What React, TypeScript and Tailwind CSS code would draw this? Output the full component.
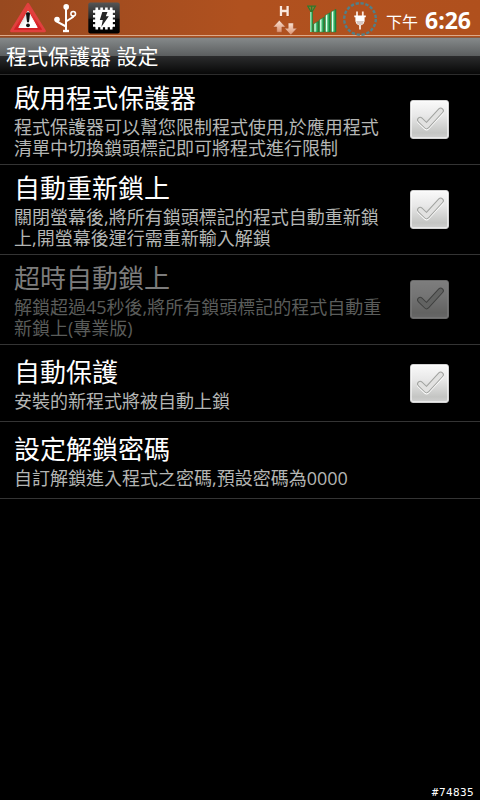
import { useState } from "react";

type Setting = {
  id: string;
  title: string;
  lines: string[];
  checkable?: boolean;
  disabled?: boolean;
};

const settings: Setting[] = [
  {
    id: "enable",
    title: "啟用程式保護器",
    lines: ["程式保護器可以幫您限制程式使用,於應用程式", "清單中切換鎖頭標記即可將程式進行限制"],
    checkable: true,
  },
  {
    id: "relock",
    title: "自動重新鎖上",
    lines: ["關閉螢幕後,將所有鎖頭標記的程式自動重新鎖", "上,開螢幕後運行需重新輸入解鎖"],
    checkable: true,
  },
  {
    id: "timeout",
    title: "超時自動鎖上",
    lines: ["解鎖超過45秒後,將所有鎖頭標記的程式自動重", "新鎖上(專業版)"],
    checkable: true,
    disabled: true,
  },
  { id: "protect", title: "自動保護", lines: ["安裝的新程式將被自動上鎖"], checkable: true },
  { id: "password", title: "設定解鎖密碼", lines: ["自訂解鎖進入程式之密碼,預設密碼為0000"] },
];

function WarningIcon() {
  return (
    <svg width="38" height="34" viewBox="0 0 38 34">
      <defs>
        <linearGradient id="warn" x1="0" y1="0" x2="0" y2="1">
          <stop offset="0" stopColor="#ee4a45" />
          <stop offset="1" stopColor="#d01a20" />
        </linearGradient>
        <linearGradient id="warnIn" x1="0" y1="0" x2="1" y2="1">
          <stop offset="0" stopColor="#b8b8b8" />
          <stop offset="0.6" stopColor="#ffffff" />
        </linearGradient>
      </defs>
      <path d="M19 3.2 35.6 30H2.4Z" fill="url(#warn)" stroke="#e0403e" strokeWidth="2.6" strokeLinejoin="round" />
      <path d="M19 10 28.2 26.5H9.8Z" fill="url(#warnIn)" stroke="url(#warnIn)" strokeWidth="1" strokeLinejoin="round" />
      <path d="M17 12.2q2-1.8 4 0l-1 9h-2Z" fill="#111" />
      <circle cx="19" cy="24.3" r="1.9" fill="#111" />
    </svg>
  );
}

function UsbIcon() {
  return (
    <svg width="24" height="30" viewBox="0 0 24 30" fill="none" stroke="#fff" strokeWidth="2">
      <path d="M12 3v24M12 22.5 3.5 18v-5M12 17.5l7-4.5v-1.5" />
      <circle cx="12.2" cy="2.9" r="2.8" fill="#fff" stroke="none" />
      <circle cx="3" cy="15.6" r="2.8" fill="#fff" stroke="none" />
      <circle cx="19.2" cy="9.8" r="2.3" strokeWidth="1.6" />
      <path d="M9 27h6" strokeWidth="2.4" />
    </svg>
  );
}

function ChipIcon() {
  return (
    <svg width="32" height="32" viewBox="0 0 32 32">
      <defs>
        <linearGradient id="chip" x1="0" y1="0" x2="0" y2="1">
          <stop offset="0" stopColor="#565656" />
          <stop offset="0.5" stopColor="#242424" />
          <stop offset="0.55" stopColor="#0a0a0a" />
          <stop offset="1" stopColor="#000" />
        </linearGradient>
      </defs>
      <rect x="0.3" y="0.5" width="31.4" height="31" rx="2" fill="url(#chip)" />
      <path
        d="M8.8 5.5v22M13.6 5.5v22M18.4 5.5v22M23.2 5.5v22M5 9.5h22M5 14.2h22M5 18.8h22M5 23.5h22"
        stroke="#fff"
        strokeWidth="2.6"
      />
      <path d="M7.3 7.8h17.4v17.4H7.3z" fill="#fff" />
      <path d="M14.3 10h5.2l-1.7 4.3h3L13.3 25l1.5-7h-3Z" fill="#262626" />
    </svg>
  );
}

function DataIcon() {
  return (
    <svg width="26" height="32" viewBox="0 0 26 32">
      <defs>
        <linearGradient id="arrow" x1="0" y1="0" x2="0" y2="1">
          <stop offset="0" stopColor="#fbe3d3" />
          <stop offset="1" stopColor="#d9906f" />
        </linearGradient>
      </defs>
      <path d="M9 2v10M15.6 2v10M9 7h7" stroke="#8a3a14" strokeWidth="2.4" opacity="0.5" transform="translate(.6 .6)" />
      <path d="M9 2v10M15.6 2v10M9 7h7" fill="none" stroke="#fbe9de" strokeWidth="2.3" />
      <path d="M7.3 16.3 13.5 23h-3.6v5.3H4.7V23H1.1Z" fill="url(#arrow)" stroke="#a04c26" strokeWidth="0.5" />
      <path d="M18.8 31 12.6 24.3h3.6V19h5.2v5.3H25Z" fill="url(#arrow)" stroke="#a04c26" strokeWidth="0.5" />
    </svg>
  );
}

const bars = [
  { x: 6.5, y: 19 },
  { x: 12.2, y: 15 },
  { x: 18, y: 10.5 },
  { x: 24, y: 7 },
];

function SignalIcon() {
  return (
    <svg width="31" height="28" viewBox="0 0 31 28">
      <defs>
        <linearGradient id="bar" x1="0" y1="0" x2="1" y2="0">
          <stop offset="0" stopColor="#1f9a4c" />
          <stop offset="0.3" stopColor="#e8fff0" />
          <stop offset="0.55" stopColor="#4cc476" />
          <stop offset="1" stopColor="#0b7434" />
        </linearGradient>
      </defs>
      <path d="M.8 1.2h7.6L4.6 7.5ZM4.6 1v8" fill="#8a7a34" stroke="#2e7a2c" strokeWidth="1.2" />
      <rect x="3" y="7" width="2.8" height="20" fill="url(#bar)" />
      {bars.map((b) => (
        <path key={b.x} d={`M${b.x} ${b.y}l5-2.8V27h-5Z`} fill="url(#bar)" stroke="#14813c" strokeWidth="0.5" />
      ))}
    </svg>
  );
}

function PlugIcon() {
  return (
    <svg width="36" height="36" viewBox="0 0 36 36">
      <circle cx="18" cy="18" r="15.8" fill="none" stroke="#517f88" strokeWidth="2.4" strokeDasharray="3.3 1.665" />
      <path d="M15 10.5v6M20.8 10.5v6M18 22v6.5" stroke="#f8e6dc" strokeWidth="1.8" />
      <path d="M12.3 14.5h11.5v1.7h-1.2v4q-.5 3.2-3.4 4h-2.4q-2.9-.8-3.4-4v-4h-1.1Z" fill="#fff" />
      <path d="M14.2 20h7.8q-.6 3-3 4h-1.8q-2.5-1-3-4Z" fill="#d9c9c2" />
    </svg>
  );
}

function StatusBar() {
  return (
    <div className="flex h-[38px] shrink-0 items-start border-b border-[#8a5a40] bg-linear-to-r from-[#98491f] via-[#b0511f] to-[#b0501d] text-white">
      <div className="flex h-9 w-full items-start border-b border-[#dba98a]">
        <div className="mt-px ml-[9px]">
          <WarningIcon />
        </div>
        <div className="mt-1 ml-[7px]">
          <UsbIcon />
        </div>
        <div className="mt-0.5 ml-2.5">
          <ChipIcon />
        </div>
        <div className="mt-1 ml-auto">
          <DataIcon />
        </div>
        <div className="mt-[5px] ml-[9px]">
          <SignalIcon />
        </div>
        <div className="mt-px ml-1">
          <PlugIcon />
        </div>
        <span className="mt-2.5 ml-2 text-[16px] leading-6">下午</span>
        <span className="mt-1.5 mr-[9px] ml-[7px] text-[23px] leading-7 font-bold">6:26</span>
      </div>
    </div>
  );
}

function CheckBox({ checked, disabled, onClick }: { checked: boolean; disabled?: boolean; onClick: () => void }) {
  return (
    <button disabled={disabled} onClick={onClick} className={disabled ? "size-[39px] opacity-50" : "size-[39px]"}>
      <svg width="39" height="39" viewBox="0 0 40 40">
        <defs>
          <linearGradient id="box" x1="0" y1="0" x2="0" y2="1">
            <stop offset="0" stopColor="#fafafa" />
            <stop offset="0.4" stopColor="#e8e8e8" />
            <stop offset="0.85" stopColor="#c4c5c3" />
            <stop offset="1" stopColor="#d0d0d0" />
          </linearGradient>
        </defs>
        <rect x="0.5" y="0.5" width="39" height="39" rx="2.5" fill="url(#box)" stroke="#d6d6d6" />
        <rect x="1.5" y="1.5" width="37" height="37" rx="1.5" fill="none" stroke="#fff" strokeOpacity="0.6" />
        <g fill="none" strokeLinecap="round" strokeLinejoin="round">
          {!disabled && <path d="M10.5 21.5 17 27.8 31.5 12" stroke="#fff" strokeWidth="6.6" />}
          <path d="M10.5 20.5 17 26.8 31.5 11" stroke={disabled ? "#7c7e7c" : "#a0a29f"} strokeWidth="6.4" />
          <path
            d="M10.5 20.5 17 26.8 31.5 11"
            stroke={checked ? "#6fbf2a" : disabled ? "#c4c5c4" : "#e2e2e1"}
            strokeWidth="4.4"
          />
        </g>
      </svg>
    </button>
  );
}

export default function App() {
  const [checked, setChecked] = useState<Record<string, boolean>>({});

  function toggle(id: string) {
    setChecked((c) => ({ ...c, [id]: !c[id] }));
  }

  return (
    <div className="flex h-[800px] w-[480px] flex-col overflow-hidden bg-black font-['Open_Sans','Noto_Sans_CJK_TC',sans-serif]">
      <StatusBar />
      <header className="flex h-[37px] shrink-0 items-center border-b border-[#2c2c2c] bg-[linear-gradient(#85898a_0px,#5b5e5f_18px,#2b2c2d_18px,#070707_36px)] pl-1.5 text-[21px] leading-[37px] whitespace-nowrap text-white">
        程式保護器 設定
      </header>
      <main>
        {settings.map((s) => (
          <div
            key={s.id}
            className={`flex items-center justify-between border-b border-[#343434] pr-[31px] pl-3.5 ${s.lines.length > 1 ? "h-[90px]" : "h-[77px]"}`}
          >
            <div className={`self-start whitespace-nowrap ${s.lines.length > 1 ? "pt-2" : "pt-3"}`}>
              <h2 className={`text-[26px] leading-[31px] ${s.disabled ? "text-[#7c7c7c]" : "text-white"}`}>{s.title}</h2>
              <div className={`mt-[3px] text-[18px] leading-[21px] ${s.disabled ? "text-[#5a5c5a]" : "text-[#b4b6b4]"}`}>
                {s.lines.map((line) => (
                  <p key={line}>{line}</p>
                ))}
              </div>
            </div>
            {s.checkable && <CheckBox checked={!!checked[s.id]} disabled={s.disabled} onClick={() => toggle(s.id)} />}
          </div>
        ))}
      </main>
      <footer className="mt-auto pr-1.5 text-right font-['DejaVu_Sans_Mono',monospace] text-[11px] leading-[15px] tracking-[0.4px] text-white">
        #74835
      </footer>
    </div>
  );
}
